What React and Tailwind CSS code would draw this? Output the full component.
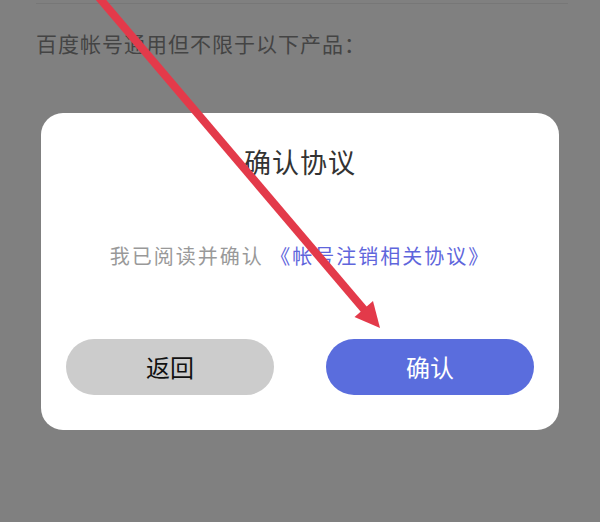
import React from 'react';

const font = { fontFamily: '"Noto Sans CJK SC", "Noto Sans", sans-serif' };

const Arrow = () => (
  <svg
    className="absolute inset-0 pointer-events-none"
    width="600"
    height="522"
    viewBox="0 0 600 522"
  >
    <line x1="96" y1="-6" x2="367" y2="313" stroke="#e33a4a" strokeWidth="8" />
    <polygon points="380,328 354.5,317 373,301" fill="#e33a4a" />
  </svg>
);

const ConfirmDialog = () => (
  <div className="mt-[59px] mx-[41px] h-[317px] bg-white rounded-[22px] flex flex-col items-center pt-[35px]">
    <h2 className="text-[27px] leading-[28px] tracking-[1px] text-[#333333]">确认协议</h2>
    <p className="mt-[70px] text-[20px] leading-[20px] tracking-[2px] text-[#999999] whitespace-nowrap">
      我已阅读并确认 <span className="text-[#5f66dc]">《帐号注销相关协议》</span>
    </p>
    <div className="mt-[73px] w-full px-[25px] flex gap-[52px]">
      <button className="flex-1 h-[56px] rounded-full bg-[#cccccc] text-[24px] leading-[56px] text-[#111111]">
        返回
      </button>
      <button className="flex-1 h-[56px] rounded-full bg-[#5a6ddd] text-[24px] leading-[56px] text-white">
        确认
      </button>
    </div>
  </div>
);

export default function App() {
  return (
    <div className="relative w-[600px] h-[522px] bg-[#808080] overflow-hidden" style={font}>
      <div className="pt-[3px] pl-[36px] pr-[32px]">
        <div className="h-px bg-[#777777]" />
      </div>
      <p className="mt-[29px] ml-[36px] text-[21px] leading-[21px] tracking-[1px] text-[#444444]">
        百度帐号通用但不限于以下产品：
      </p>
      <ConfirmDialog />
      <Arrow />
    </div>
  );
}
